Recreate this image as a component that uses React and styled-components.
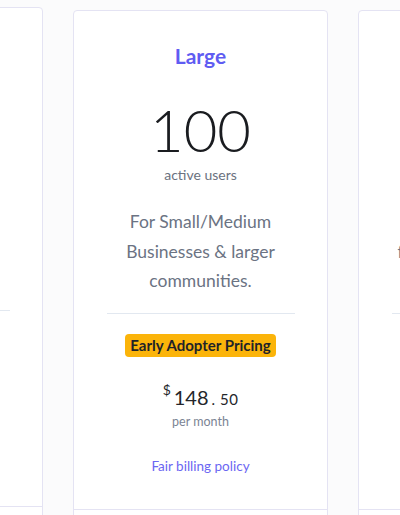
import React from "react";
import styled, { createGlobalStyle } from "styled-components";

const Global = createGlobalStyle`
  html, body { margin: 0; padding: 0; background: #fbfbfc; }
  body { font-family: "Lato", "Noto Sans", sans-serif; overflow: hidden; }
`;

const Stage = styled.div`
  width: 400px;
  height: 515px;
  overflow: hidden;
  display: flex;
  justify-content: center;
  padding-top: 10px;
  box-sizing: border-box;
`;

const Row = styled.div`
  display: flex;
  gap: 30px;
  flex-shrink: 0;
  align-items: flex-start;
`;

const Card = styled.div`
  width: 255px;
  box-sizing: border-box;
  background: #ffffff;
  border: 1px solid #e4e3f3;
  border-radius: 4px;
  display: flex;
  flex-direction: column;
  transform: translateY(${(p) => (p.$raised ? "-3px" : "0")});
`;

const Body = styled.div`
  padding: 31px 32px 0 33px;
  display: flex;
  flex-direction: column;
  align-items: center;
  text-align: center;
  height: 498px;
  box-sizing: border-box;
`;

const Title = styled.div`
  font-size: 21px;
  line-height: 28px;
  font-weight: 700;
  color: #5f5cf2;
`;

const Count = styled.div`
  margin-top: 31px;
  font-size: 58px;
  line-height: 58px;
  font-weight: 300;
  color: #1a1c20;
`;

const Unit = styled.div`
  margin-top: 7px;
  font-size: 14px;
  line-height: 18px;
  color: #6b7280;
`;

const Description = styled.p`
  margin: 23px 0 0;
  font-size: 17.5px;
  line-height: 29.5px;
  color: #6b7383;
  white-space: nowrap;
`;

const Divider = styled.hr`
  width: 100%;
  margin: 17px 0 0;
  border: 0;
  border-top: 1px solid #e2e8f0;
`;

const Badge = styled.span`
  margin-top: 20px;
  background: #fbb40a;
  color: #1f2328;
  font-size: 15px;
  font-weight: 700;
  line-height: 23px;
  padding: 0 5px;
  border-radius: 4px;
`;

const Price = styled.div`
  margin-top: 29px;
  display: flex;
  align-items: baseline;
  color: #24262b;
`;

const Currency = styled.span`
  font-size: 14px;
  align-self: flex-start;
  margin-right: 3px;
  line-height: 14px;
  margin-top: -3px;
`;

const Amount = styled.span`
  font-size: 20px;
  line-height: 22px;
`;

const Cents = styled.span`
  font-size: 15px;
  margin-left: 3px;
  letter-spacing: 0.5px;
`;

const PerMonth = styled.div`
  margin-top: 6px;
  font-size: 12.5px;
  line-height: 16px;
  color: #7b8494;
`;

const Policy = styled.a`
  margin-top: 27px;
  font-size: 13.5px;
  line-height: 18px;
  color: #6b66f2;
  text-decoration: none;
`;

const Footer = styled.div`
  border-top: 1px solid #e4e3f3;
  height: 40px;
`;

const plans = [
  {
    name: "Medium",
    count: "50",
    lines: ["For Small Businesses", "& growing", "teams."],
    amount: "98",
    cents: "50",
    raised: true,
  },
  {
    name: "Large",
    count: "100",
    lines: ["For Small/Medium", "Businesses & larger", "communities."],
    amount: "148",
    cents: "50",
  },
  {
    name: "Huge",
    count: "250",
    lines: ["Enterprise plans", "for larger organisations", "& networks."],
    amount: "298",
    cents: "50",
  },
];

export default function App() {
  return (
    <>
      <Global />
      <Stage>
        <Row>
          {plans.map((p) => (
            <Card key={p.name} $raised={p.raised}>
              <Body>
                <Title>{p.name}</Title>
                <Count>{p.count}</Count>
                <Unit>active users</Unit>
                <Description>
                  {p.lines.map((l, i) => (
                    <React.Fragment key={i}>
                      {i > 0 && <br />}
                      {l}
                    </React.Fragment>
                  ))}
                </Description>
                <Divider />
                <Badge>Early Adopter Pricing</Badge>
                <Price>
                  <Currency>$</Currency>
                  <Amount>{p.amount}</Amount>
                  <Cents>. {p.cents}</Cents>
                </Price>
                <PerMonth>per month</PerMonth>
                <Policy href="#">Fair billing policy</Policy>
              </Body>
              <Footer />
            </Card>
          ))}
        </Row>
      </Stage>
    </>
  );
}
